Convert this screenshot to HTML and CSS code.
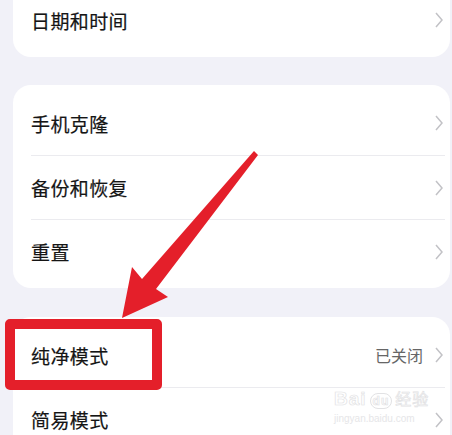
FILE: index.html
```html
<!DOCTYPE html>
<html lang="zh-CN">
<head>
  <meta charset="UTF-8" />
  <meta name="viewport" content="width=device-width, initial-scale=1.0"/>
  <title>设置</title>
  <link rel="stylesheet" href="styles.css">
</head>
<body>
  <div class="screen">

    <div class="group group-first">
      <div class="row">
        <span class="label">日期和时间</span>
        <svg class="chevron" viewBox="0 0 8 16"><path d="M1 1 L7 8 L1 15"/></svg>
      </div>
    </div>

    <div class="group">
      <div class="row">
        <span class="label">手机克隆</span>
        <svg class="chevron" viewBox="0 0 8 16"><path d="M1 1 L7 8 L1 15"/></svg>
      </div>
      <div class="row">
        <span class="label">备份和恢复</span>
        <svg class="chevron" viewBox="0 0 8 16"><path d="M1 1 L7 8 L1 15"/></svg>
      </div>
      <div class="row">
        <span class="label">重置</span>
        <svg class="chevron" viewBox="0 0 8 16"><path d="M1 1 L7 8 L1 15"/></svg>
      </div>
    </div>

    <div class="group">
      <div class="row">
        <span class="label">纯净模式</span>
        <span class="value">已关闭</span>
        <svg class="chevron" viewBox="0 0 8 16"><path d="M1 1 L7 8 L1 15"/></svg>
      </div>
      <div class="row">
        <span class="label">简易模式</span>
        <svg class="chevron" viewBox="0 0 8 16"><path d="M1 1 L7 8 L1 15"/></svg>
      </div>
    </div>

    <!-- annotation overlays -->
    <div class="highlight"></div>
    <svg class="arrow" viewBox="0 0 452 435">
      <polygon points="254,151 258,155 156,289 168,297 122,318 132,267 142,279"/>
    </svg>

    <div class="watermark">
      <div class="wm-top">Bai<span class="wm-paw">du</span><span class="wm-cn">经验</span></div>
      <div class="wm-url">jingyan.baidu.com</div>
    </div>
  </div>
</body>
</html>
```

FILE: styles.css
```css
* {
  box-sizing: border-box;
  margin: 0;
  padding: 0;
}

body {
  font-family: "Noto Sans CJK SC", "Noto Sans", sans-serif;
  background-color: #f1f1f8;
  overflow: hidden;
}

.screen {
  position: relative;
  width: 452px;
  height: 435px;
  padding: 0 2px 0 13px;
  overflow: hidden;
}

.group {
  background: #fff;
  border-radius: 18px;
  padding: 6px 0 5px;
  margin-bottom: 29px;
}

.group-first {
  margin-top: -18px;
  margin-bottom: 28px;
}

.row {
  display: flex;
  align-items: center;
  height: 64px;
  margin-left: 18px;
  margin-right: 5px;
  padding-right: 2px;
  border-top: 1px solid #ebebef;
}

.row:first-child {
  border-top: none;
}

.label {
  flex: 1;
  font-size: 19px;
  color: #151515;
  letter-spacing: 0.4px;
  -webkit-text-stroke: 0.2px #151515;
}

.value {
  font-size: 16px;
  color: #666;
  margin-right: 12px;
}

.chevron {
  width: 8px;
  height: 16px;
  fill: none;
  stroke: #c2c2c6;
  stroke-width: 1.5;
}

/* Annotation */
.highlight {
  position: absolute;
  left: 5px;
  top: 319px;
  width: 157px;
  height: 71px;
  border: 10px solid #e41f2a;
  border-radius: 5px;
}

.arrow {
  position: absolute;
  left: 0;
  top: 0;
  width: 452px;
  height: 435px;
  fill: #e41f2a;
}

.watermark {
  position: absolute;
  left: 334px;
  top: 387px;
  color: #fff;
  font-family: "Liberation Sans", sans-serif;
}

.wm-top {
  font-size: 19px;
  font-weight: bold;
  line-height: 22px;
  letter-spacing: 1px;
  -webkit-text-stroke: 0.7px #e2e2e4;
}

.wm-paw {
  font-size: 12px;
  border: 1px solid #e2e2e4;
  border-radius: 9px;
  padding: 0 2px;
  margin: 0 3px;
}

.wm-cn {
  font-family: "Noto Sans CJK SC", sans-serif;
  font-weight: normal;
  font-size: 16px;
}

.wm-url {
  font-size: 10px;
  line-height: 14px;
  color: #e6e6e8;
}
```
